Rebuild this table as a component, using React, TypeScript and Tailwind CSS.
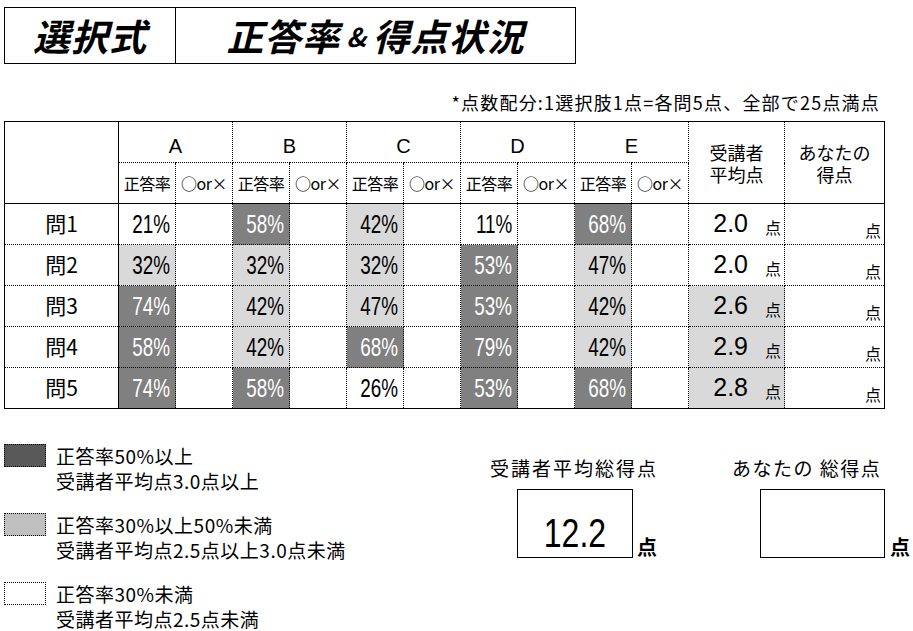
type Shade = "D" | "L" | "W";

type Row = {
  label: string;
  cells: [number, Shade][];
  avg: string;
  avgShade: Shade;
};

const rows: Row[] = [
  { label: "問1", cells: [[21, "W"], [58, "D"], [42, "L"], [11, "W"], [68, "D"]], avg: "2.0", avgShade: "W" },
  { label: "問2", cells: [[32, "L"], [32, "L"], [32, "L"], [53, "D"], [47, "L"]], avg: "2.0", avgShade: "W" },
  { label: "問3", cells: [[74, "D"], [42, "L"], [47, "L"], [53, "D"], [42, "L"]], avg: "2.6", avgShade: "L" },
  { label: "問4", cells: [[58, "D"], [42, "L"], [68, "D"], [79, "D"], [42, "L"]], avg: "2.9", avgShade: "L" },
  { label: "問5", cells: [[74, "D"], [58, "D"], [26, "W"], [53, "D"], [68, "D"]], avg: "2.8", avgShade: "L" },
];

const letters = ["A", "B", "C", "D", "E"];

function shadeClass(s: Shade) {
  if (s === "D") return "bg-[#808080] text-white";
  if (s === "L") return "bg-[#d9d9d9] text-black";
  return "bg-white text-black";
}

const cell = "border border-dotted border-black p-0";

function ScoreTable() {
  return (
    <table className="ml-[4px] w-[880px] table-fixed border-collapse border border-solid border-black">
      <colgroup>
        <col className="w-[114px]" />
        {letters.map((l) => (
          <>
            <col key={l + "a"} className="w-[57px]" />
            <col key={l + "b"} className="w-[57px]" />
          </>
        ))}
        <col className="w-[96px]" />
        <col className="w-[100px]" />
      </colgroup>
      <thead>
        <tr className="h-[41px]">
          <th
            rowSpan={2}
            className={`${cell} [border-right-style:solid] [border-bottom-style:solid]`}
          />
          {letters.map((l) => (
            <th
              key={l}
              colSpan={2}
              className={`${cell} pb-[4px] align-bottom font-['Liberation_Sans',sans-serif] text-[20px] leading-[24px] font-normal`}
            >
              {l}
            </th>
          ))}
          <th
            rowSpan={2}
            className={`${cell} [border-bottom-style:solid] text-center align-middle text-[18px] leading-[22px] font-normal`}
          >
            受講者
            <br />
            平均点
          </th>
          <th
            rowSpan={2}
            className={`${cell} [border-bottom-style:solid] text-center align-middle text-[18px] leading-[22px] font-normal`}
          >
            あなたの
            <br />
            得点
          </th>
        </tr>
        <tr className="h-[41px]">
          {letters.map((l) => (
            <>
              <th
                key={l + "r"}
                className={`${cell} [border-bottom-style:solid] text-center text-[16px] font-normal tracking-[-0.5px]`}
              >
                正答率
              </th>
              <th
                key={l + "o"}
                className={`${cell} [border-bottom-style:solid] text-center text-[16px] font-normal tracking-[-0.5px]`}
              >
                ○or×
              </th>
            </>
          ))}
        </tr>
      </thead>
      <tbody>
        {rows.map((r) => (
          <tr key={r.label} className="h-[41px]">
            <td className={`${cell} [border-right-style:solid] text-center text-[21px] font-normal`}>
              {r.label}
            </td>
            {r.cells.map(([v, s], i) => (
              <>
                <td
                  key={r.label + i + "v"}
                  className={`${cell} ${shadeClass(s)} pr-[5px] text-right font-['Liberation_Sans',sans-serif] text-[23px]`}
                >
                  <span className="inline-block origin-right scale-x-[0.82] scale-y-[1.15]">{v}%</span>
                </td>
                <td key={r.label + i + "o"} className={cell} />
              </>
            ))}
            <td className={`${cell} ${shadeClass(r.avgShade)}`}>
              <div className="flex items-end justify-end pr-[3px] pb-[2px]">
                <span className="font-['Liberation_Sans',sans-serif] text-[25px] leading-[28px]">
                  {r.avg}
                </span>
                <span className="ml-[17px] text-[16px] leading-[20px]">点</span>
              </div>
            </td>
            <td className={cell}>
              <div className="flex items-end justify-end pr-[3px] pb-[2px] pt-[14px]">
                <span className="text-[16px] leading-[20px]">点</span>
              </div>
            </td>
          </tr>
        ))}
      </tbody>
    </table>
  );
}

const legend = [
  { color: "bg-[#595959]", lines: ["正答率50%以上", "受講者平均点3.0点以上"] },
  { color: "bg-[#c0c0c0]", lines: ["正答率30%以上50%未満", "受講者平均点2.5点以上3.0点未満"] },
  { color: "bg-white", lines: ["正答率30%未満", "受講者平均点2.5点未満"] },
];

function Legend() {
  return (
    <div className="ml-[4px] flex w-[486px] flex-col gap-[19px]">
      {legend.map((item) => (
        <div key={item.lines[0]} className="flex items-start gap-[10px]">
          <div
            className={`mt-[1px] h-[23px] w-[42px] shrink-0 border border-dotted border-black ${item.color}`}
          />
          <div className="text-[19px] leading-[25px] tracking-[0.5px]">
            {item.lines.map((line) => (
              <div key={line}>{line}</div>
            ))}
          </div>
        </div>
      ))}
    </div>
  );
}

function Totals() {
  return (
    <div className="mt-[15px] flex items-start">
      <div className="flex w-[242px] flex-col">
        <div className="text-[19px] leading-[20px] tracking-[2px]">受講者平均総得点</div>
        <div className="mt-[11px] flex items-end">
          <div className="ml-[27px] flex h-[69px] w-[116px] items-end justify-center border border-black pb-[2px]">
            <span className="inline-block scale-x-[0.8] font-['Liberation_Sans',sans-serif] text-[40px] leading-[44px]">
              12.2
            </span>
          </div>
          <span className="ml-[4px] text-[20px] leading-[22px] font-bold">点</span>
        </div>
      </div>
      <div className="flex flex-col">
        <div className="text-[19px] leading-[20px] tracking-[1.5px]">あなたの 総得点</div>
        <div className="mt-[11px] flex items-end">
          <div className="ml-[28px] h-[69px] w-[125px] border border-black" />
          <span className="ml-[5px] text-[20px] leading-[22px] font-bold">点</span>
        </div>
      </div>
    </div>
  );
}

export default function App() {
  return (
    <div className="h-[631px] w-[913px] overflow-hidden bg-white pt-[7px] font-['Noto_Sans_CJK_JP',sans-serif] text-black">
      <div className="ml-[4px] flex h-[57px] w-[572px] border border-black">
        <div className="flex w-[171px] items-center justify-center border-r border-black text-[37px] font-bold italic tracking-[1px]">
          選択式
        </div>
        <div className="flex flex-1 items-center justify-center text-[37px] font-bold italic tracking-[1px]">
          正答率
          <span className="mx-[6px] text-[26px]">&amp;</span>
          得点状況
        </div>
      </div>

      <p className="mt-[27px] w-[880px] text-right text-[18px] leading-[22px] tracking-[1.2px]">
        *点数配分:1選択肢1点=各問5点、全部で25点満点
      </p>

      <div className="mt-[8px]">
        <ScoreTable />
      </div>

      <div className="mt-[34px] flex">
        <Legend />
        <Totals />
      </div>
    </div>
  );
}
